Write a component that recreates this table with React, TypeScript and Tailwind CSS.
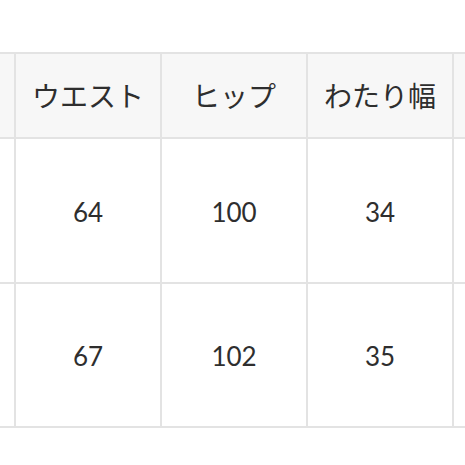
import React from "react";

const headers = ["サイズ", "ウエスト", "ヒップ", "わたり幅", "股上"];
const rows = [
  ["S", "64", "100", "34", "28"],
  ["M", "67", "102", "35", "29"],
];

export default function App() {
  return (
    <div className="w-[465px] h-[465px] overflow-hidden bg-white">
      <div
        className="mt-[52px] ml-[-132px] w-[732px] grid grid-cols-[repeat(5,144px)] grid-rows-[83px_143px_142px] gap-[2px] p-[2px] bg-[#e3e3e3] text-[#2e2e2e]"
        style={{ fontFamily: "Lato, 'Noto Sans CJK JP', sans-serif" }}
      >
        {headers.map((h, j) => (
          <div key={`h-${j}`} className="bg-[#f7f7f7] flex items-center justify-center text-[28px]">
            {h}
          </div>
        ))}
        {rows.flatMap((r, i) =>
          r.map((c, j) => (
            <div key={`${i}-${j}`} className="bg-white flex items-center justify-center text-[26px] pt-[3px]">
              {c}
            </div>
          ))
        )}
      </div>
    </div>
  );
}
